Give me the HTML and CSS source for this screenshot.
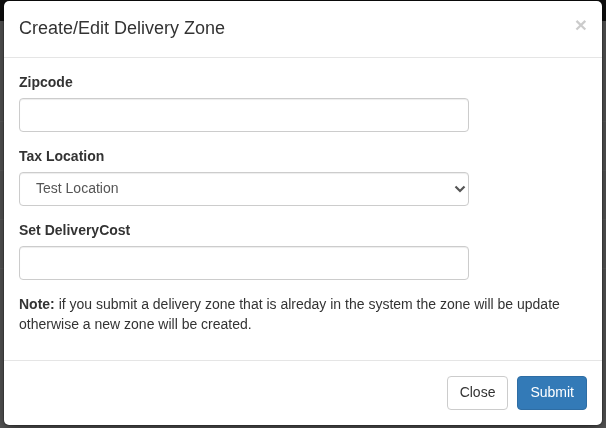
FILE: index.html
```html
<!DOCTYPE html>
<html>
<head>
<meta charset="utf-8">
<link rel="stylesheet" href="styles.css">
</head>
<body>
<div class="page">
  <div class="navbar"></div>
  <div class="page-lines">
    <div class="pline"></div>
    <div class="pline"></div>
    <div class="pline"></div>
    <div class="pline"></div>
  </div>
</div>
<div class="modal">
  <div class="modal-header">
    <span class="close">&times;</span>
    <h4 class="modal-title">Create/Edit Delivery Zone</h4>
  </div>
  <div class="modal-body">
    <div class="form-group">
      <label class="label">Zipcode</label>
      <input class="form-control" type="text">
    </div>
    <div class="form-group">
      <label class="label">Tax Location</label>
      <div class="select-wrap">
        <select class="form-control select">
          <option>Test Location</option>
        </select>
        <svg class="chevron" width="12" height="8" viewBox="0 0 12 8"><path d="M1.5 1.5 L6 6 L10.5 1.5" fill="none" stroke="#555" stroke-width="2.2"/></svg>
      </div>
    </div>
    <div class="form-group">
      <label class="label">Set DeliveryCost</label>
      <input class="form-control" type="text">
    </div>
    <p class="note"><strong>Note:</strong> if you submit a delivery zone that is alreday in the system the zone will be update otherwise a new zone will be created.</p>
  </div>
  <div class="modal-footer">
    <button class="btn btn-default">Close</button>
    <button class="btn btn-primary">Submit</button>
  </div>
</div>
</body>
</html>
```
FILE: styles.css
```css
* { box-sizing: border-box; }
html, body { margin: 0; padding: 0; }
body {
  background: #5b5b5b;
  font-family: "Liberation Sans", Arial, Helvetica, sans-serif;
  font-size: 14px;
  line-height: 1.42857;
  color: #333;
  width: 606px;
  height: 428px;
  overflow: hidden;
}
.page { height: 428px; display: flex; flex-direction: column; }
.navbar { height: 21px; background: #0f0f0f; }
.page-lines { display: flex; flex-direction: column; padding-top: 100px; gap: 48px; }
.pline { height: 1px; background: #626262; }
.modal {
  position: fixed;
  left: 3px;
  top: 0;
  width: 600px;
  background: #fff;
  border: 1px solid rgba(0,0,0,.2);
  border-radius: 6px;
  box-shadow: 0 5px 15px rgba(0,0,0,.5);
  background-clip: padding-box;
}
.modal-header {
  padding: 15px;
  border-bottom: 1px solid #e5e5e5;
}
.modal-title {
  margin: 0;
  font-size: 18px;
  font-weight: 500;
  line-height: 1.42857;
}
.close {
  float: right;
  margin-top: -2px;
  font-size: 21px;
  font-weight: bold;
  line-height: 1;
  color: #000;
  opacity: .2;
}
.modal-body { padding: 15px; }
.form-group { margin-bottom: 15px; display: flex; flex-direction: column; }
.label {
  display: block;
  font-weight: bold;
  margin-bottom: 5px;
}
.form-control {
  display: block;
  width: 450px;
  height: 34px;
  padding: 6px 12px;
  font-family: inherit;
  font-size: 14px;
  line-height: 1.42857;
  color: #555;
  background: #fff;
  border: 1px solid #ccc;
  border-radius: 4px;
  box-shadow: inset 0 1px 1px rgba(0,0,0,.075);
  margin: 0;
}
.select-wrap { position: relative; width: 450px; }
.select {
  -webkit-appearance: none;
  appearance: none;
  padding-left: 16px;
}
.chevron {
  position: absolute;
  left: 435px;
  top: 13px;
  pointer-events: none;
}
.note { margin: 0 0 10px; }
.modal-footer {
  padding: 15px;
  text-align: right;
  border-top: 1px solid #e5e5e5;
  display: flex;
  justify-content: flex-end;
  gap: 9px;
}
.btn {
  display: inline-block;
  padding: 6px 12px;
  font-family: inherit;
  font-size: 14px;
  line-height: 1.42857;
  border: 1px solid transparent;
  border-radius: 4px;
  margin: 0;
}
.btn-default { color: #333; background: #fff; border-color: #ccc; }
.btn-primary { color: #fff; background: #337ab7; border-color: #2e6da4; }
```
